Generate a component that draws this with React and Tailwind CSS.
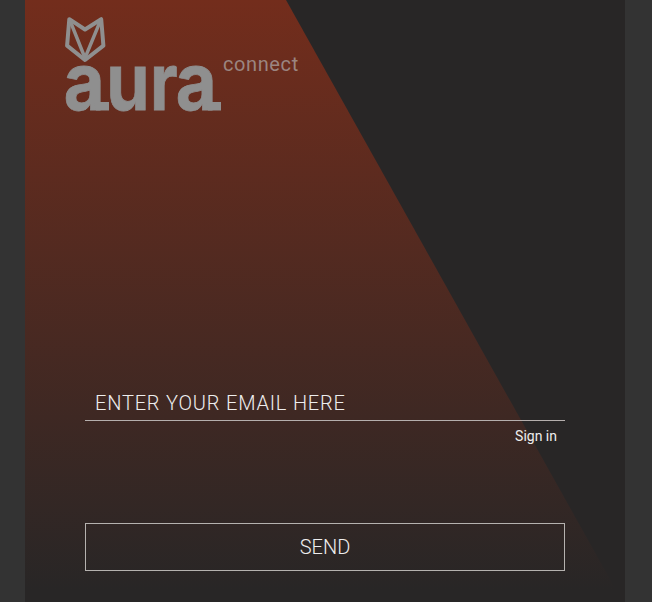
function Logo() {
  return (
    <svg className="h-24 w-[158px] shrink-0 overflow-visible" viewBox="0 0 158 96" fill="none" role="img" aria-label="aura">
      <g stroke="#8f8f8f" strokeWidth="4" strokeLinejoin="round">
        <path d="M4.300 3.200 20 13.500 36.200 3.200 38.400 29.600 20 44 2.100 29.600Z" />
        <path d="M4.800 4 20 42 35.700 4" strokeWidth="3.400" />
      </g>
      <g fill="#8f8f8f" stroke="#8f8f8f" strokeWidth="0.8" fontFamily="Inter, sans-serif" fontWeight="700" fontSize="79">
        <text transform="translate(-1.300 94) scale(.89 1)">a</text>
        <text transform="translate(41.300 94) scale(.88 1)">u</text>
        <text transform="translate(85 94) scale(.86 1)">r</text>
        <text transform="translate(110.700 94) scale(.89 1)">a</text>
      </g>
      <path d="M29 86h15v8.500H31zM141 86h15v8.500h-13z" fill="#8f8f8f" />
    </svg>
  );
}

export default function App() {
  return (
    <main className="h-[602px] w-full overflow-hidden bg-[#333333] px-[25px] font-['Roboto',sans-serif]">
      <section className="flex h-full w-[600px] flex-col bg-[#282626]">
        <div className="flex h-full flex-col bg-[linear-gradient(180deg,#732d1c_0%,#282626_98%)] [clip-path:polygon(0_0,261px_0,600px_606px,0_606px)]">
          <header className="flex pl-10 pt-4">
            <Logo />
            <span className="mt-[34px] text-[20px] leading-7 tracking-[0.6px] text-[#9b8580]">connect</span>
          </header>
        </div>
        <form className="z-10 -mt-[216px] flex h-[216px] shrink-0 flex-col px-[60px]" onSubmit={(e) => e.preventDefault()}>
          <input
            aria-label="Email"
            placeholder="ENTER YOUR EMAIL HERE"
            className="h-[35px] w-full shrink-0 border-b border-[#b5afad] bg-transparent px-[10px] text-[20px] font-light tracking-[0.8px] text-white outline-none placeholder:text-[#eeeeee]"
          />
          <a className="mr-2 mt-[5px] self-end text-sm leading-5 text-[#eeeeee]">Sign in</a>
          <button className="mt-[77px] h-12 w-full shrink-0 border border-[#b5b2af] text-[20px] font-light text-[#eeeeee]">
            SEND
          </button>
        </form>
      </section>
    </main>
  );
}
